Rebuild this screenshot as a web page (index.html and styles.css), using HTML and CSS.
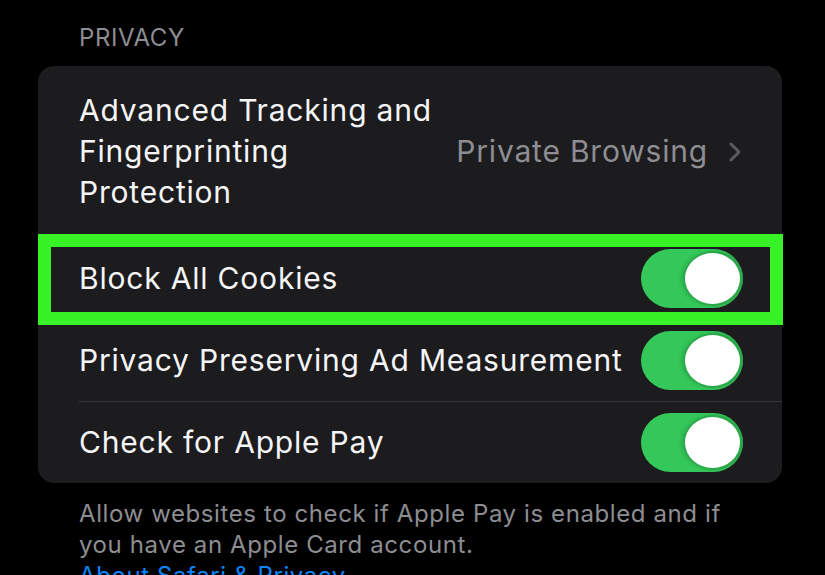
FILE: index.html
```html
<!DOCTYPE html>
<html lang="en">
<head>
<meta charset="utf-8">
<title>Privacy</title>
<link rel="stylesheet" href="styles.css">
</head>
<body>
<main class="page">
  <h2 class="section-title">PRIVACY</h2>
  <section class="card">
    <div class="row row-tall">
      <span class="label">Advanced Tracking and<br>Fingerprinting<br>Protection</span>
      <span class="detail">
        <span class="value">Private Browsing</span>
        <svg class="chevron" width="14" height="22" viewBox="0 0 14 22"><path d="M3 3 L11 11 L3 19" fill="none" stroke="#5b5b60" stroke-width="3" stroke-linecap="round" stroke-linejoin="round"/></svg>
      </span>
    </div>
    <div class="row">
      <span class="label">Block All Cookies</span>
      <span class="toggle"><span class="knob"></span></span>
    </div>
    <div class="row">
      <span class="label">Privacy Preserving Ad Measurement</span>
      <span class="toggle"><span class="knob"></span></span>
    </div>
    <div class="row row-sep">
      <span class="label">Check for Apple Pay</span>
      <span class="toggle"><span class="knob"></span></span>
    </div>
    <div class="highlight"></div>
  </section>
  <p class="footer">Allow websites to check if Apple Pay is enabled and if<br>you have an Apple Card account.</p>
  <a class="link" href="#">About Safari &amp; Privacy</a>
</main>
</body>
</html>
```
FILE: styles.css
```css
html, body {
  margin: 0;
  padding: 0;
  background: #000;
  height: 100%;
  overflow: hidden;
}
body {
  font-family: Inter, "Noto Sans", sans-serif;
  color: #fff;
}
.page {
  padding: 0 43px 0 38px;
}
.section-title {
  margin: 0;
  padding: 23px 0 0 41px;
  height: 66px;
  box-sizing: border-box;
  font-size: 24px;
  line-height: 30px;
  font-weight: 400;
  color: #8d8d92;
  letter-spacing: 0.6px;
}
.card {
  position: relative;
  background: #1c1c1e;
  border-radius: 16px;
  width: 744px;
}
.row {
  height: 82px;
  display: flex;
  align-items: center;
  justify-content: space-between;
  padding: 0 39px 0 41px;
  box-sizing: border-box;
  position: relative;
}
.row-tall {
  height: 171px;
}
.row-sep::before {
  content: "";
  position: absolute;
  left: 41px;
  right: 0;
  top: 0;
  height: 1px;
  background: #3a3a3d;
}
.label {
  font-size: 30px;
  line-height: 41px;
  color: #f5f5f7;
  letter-spacing: 0.8px;
}
.detail {
  display: flex;
  align-items: center;
  gap: 20px;
  margin-right: 1px;
}
.value {
  font-size: 30px;
  line-height: 41px;
  color: #8d8d92;
  letter-spacing: 0.8px;
}
.chevron {
  display: block;
}
.toggle {
  width: 102px;
  height: 59px;
  border-radius: 30px;
  background: linear-gradient(90deg, #34c759 0%, #34c759 60%, #2fb34f 100%);
  position: relative;
  flex: none;
}
.knob {
  position: absolute;
  right: 3px;
  top: 4px;
  width: 55px;
  height: 51px;
  border-radius: 50%;
  background: #fff;
  box-shadow: 1px 0 0 2px #2aa84a, -3px 0 4px rgba(0,0,0,0.18);
}
.highlight {
  position: absolute;
  left: 0;
  right: -1px;
  top: 168px;
  height: 91px;
  border: 13px solid #36f227;
  box-sizing: border-box;
}
.footer {
  margin: 15px 0 0 41px;
  font-size: 24px;
  line-height: 31px;
  color: #8d8d92;
  letter-spacing: 0.6px;
}
.link {
  display: block;
  margin-left: 41px;
  font-size: 24px;
  line-height: 31px;
  color: #0a84ff;
  text-decoration: none;
  letter-spacing: 0.6px;
}
```
